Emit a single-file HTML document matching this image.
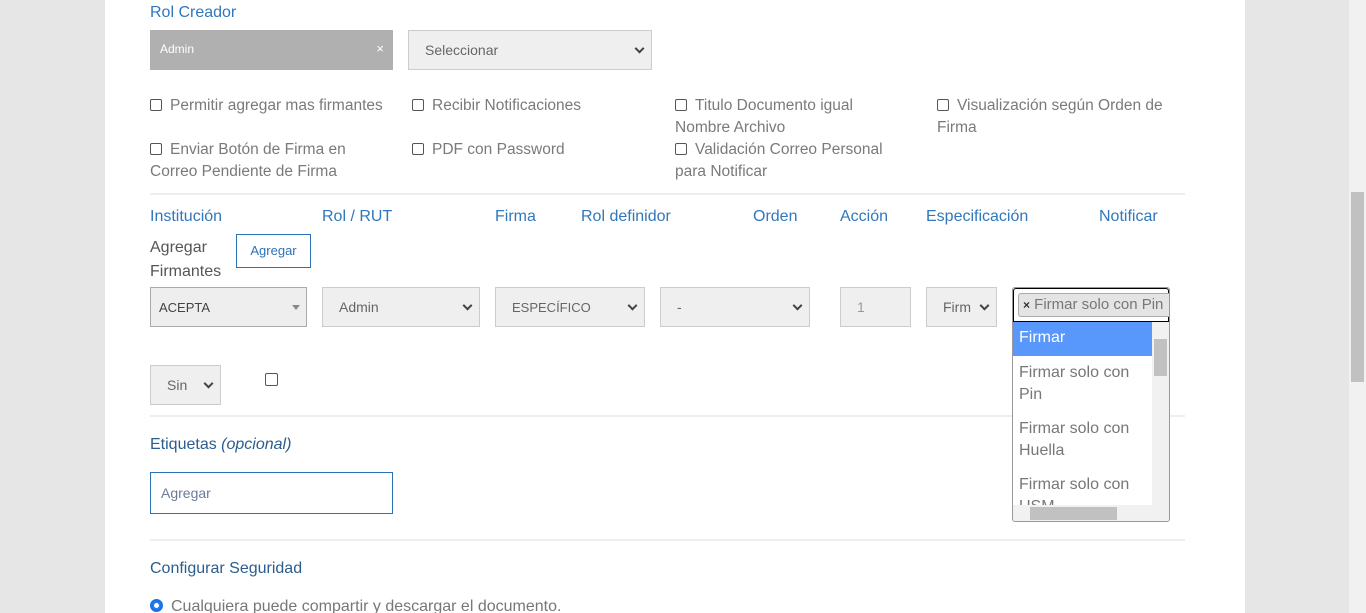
<!DOCTYPE html>
<html><head><meta charset="utf-8"><style>
*{box-sizing:border-box;margin:0;padding:0}
html,body{width:1366px;height:613px;overflow:hidden}
body{background:#e6e6e6;font-family:"Liberation Sans",sans-serif;position:relative}
.main{position:absolute;left:105px;top:0;width:1140px;height:613px;background:#fff}
.a{position:absolute;white-space:nowrap}
.blue{color:#3077bd;font-size:16px}
.g{color:#7a7a7a;font-size:15.5px;line-height:22px}
.cb{display:inline-block;width:12px;height:12px;border:1px solid #555;border-radius:2px;vertical-align:-1px;margin-right:8px;background:#fff}
.sel{position:absolute;background:#efefef;border:1px solid #ccc;color:#666;font-size:14px;padding-left:16px;display:flex;align-items:center}
.chev{position:absolute;right:8px;top:50%;width:7px;height:7px;border-right:2px solid #444;border-bottom:2px solid #444;transform:translateY(-70%) rotate(45deg)}
.hr{position:absolute;left:150px;width:1035px;height:2px;background:#eee}
</style></head><body>
<div class="main"></div>
<div class="a blue" style="left:150px;top:4px">Rol Creador</div>
<div class="a" style="left:150px;top:30px;width:243px;height:40px;background:#b0b0b0;color:#fff;font-size:12px;padding:12px 10px">Admin<span style="position:absolute;right:9px;top:11px;font-size:13px">×</span></div>
<div class="sel" style="left:408px;top:30px;width:244px;height:40px">Seleccionar<span class="chev"></span></div>

<div class="a g" style="left:150px;top:95px"><span class="cb"></span>Permitir agregar mas firmantes</div>
<div class="a g" style="left:412px;top:95px"><span class="cb"></span>Recibir Notificaciones</div>
<div class="a g" style="left:675px;top:95px"><span class="cb"></span>Titulo Documento igual<br>Nombre Archivo</div>
<div class="a g" style="left:937px;top:95px"><span class="cb"></span>Visualización según Orden de<br>Firma</div>
<div class="a g" style="left:150px;top:139px"><span class="cb"></span>Enviar Botón de Firma en<br>Correo Pendiente de Firma</div>
<div class="a g" style="left:412px;top:139px"><span class="cb"></span>PDF con Password</div>
<div class="a g" style="left:675px;top:139px"><span class="cb"></span>Validación Correo Personal<br>para Notificar</div>
<div class="hr" style="top:193px"></div>

<div class="a blue" style="left:150px;top:208px">Institución</div>
<div class="a blue" style="left:322px;top:208px">Rol / RUT</div>
<div class="a blue" style="left:495px;top:208px">Firma</div>
<div class="a blue" style="left:581px;top:208px">Rol definidor</div>
<div class="a blue" style="left:753px;top:208px">Orden</div>
<div class="a blue" style="left:840px;top:208px">Acción</div>
<div class="a blue" style="left:926px;top:208px">Especificación</div>
<div class="a blue" style="left:1099px;top:208px">Notificar</div>
<div class="a" style="left:150px;top:236px;color:#555;font-size:16px;line-height:24px">Agregar<br>Firmantes</div>
<div class="a" style="left:236px;top:234px;width:75px;height:34px;border:1px solid #2a72b8;color:#2a72b8;font-size:13px;text-align:center;line-height:32px">Agregar</div>

<div class="a" style="left:150px;top:287px;width:157px;height:40px;background:#eee;border:1px solid #aaa;color:#444;font-size:13px;padding:12px 8px">ACEPTA<span style="position:absolute;right:6px;top:17px;border:4px solid transparent;border-top:5px solid #888"></span></div>
<div class="sel" style="left:322px;top:287px;width:158px;height:40px">Admin<span class="chev"></span></div>
<div class="sel" style="left:495px;top:287px;width:150px;height:40px;font-size:13px">ESPECÍFICO<span class="chev"></span></div>
<div class="sel" style="left:660px;top:287px;width:150px;height:40px">-<span class="chev"></span></div>
<div class="sel" style="left:840px;top:287px;width:71px;height:40px;color:#999">1</div>
<div class="sel" style="left:926px;top:287px;width:71px;height:40px;padding-left:16px">Firm<span class="chev"></span></div>

<div class="sel" style="left:150px;top:365px;width:71px;height:40px">Sin<span class="chev"></span></div>
<div class="a" style="left:265px;top:373px;width:13px;height:13px;border:1px solid #555;border-radius:2px"></div>
<div class="hr" style="top:415px"></div>

<div class="a" style="left:150px;top:436px;color:#2b5d8e;font-size:16px">Etiquetas <i>(opcional)</i></div>
<div class="a" style="left:150px;top:472px;width:243px;height:42px;border:1px solid #2a72b8;color:#6a7b9a;font-size:14px;padding:12px 10px">Agregar</div>
<div class="hr" style="top:539px"></div>
<div class="a" style="left:150px;top:560px;color:#2b5d8e;font-size:16px">Configurar Seguridad</div>
<div class="a" style="left:150px;top:598px;color:#777;font-size:16px"><span style="display:inline-block;width:13px;height:13px;border-radius:50%;border:3px solid #1a73e8;background:#fff;box-shadow:inset 0 0 0 1px #1a73e8;vertical-align:-1px;margin-right:8px"></span>Cualquiera puede compartir y descargar el documento.</div>

<div class="a" style="left:1012px;top:287px;width:158px;height:235px;border:1px solid #999;border-radius:3px;background:#fff;overflow:hidden;z-index:5">
 <div style="position:absolute;left:0;top:0;width:156px;height:34px;border:1px solid #000;border-radius:3px 3px 0 0"></div>
 <div style="position:absolute;left:5px;top:5px;width:160px;height:24px;border:1px solid #aaa;border-radius:3px;background:#e4e4e4;color:#777;font-size:15px;padding:2px 4px;white-space:nowrap;overflow:hidden"><b style="color:#333;font-size:12px">×</b> Firmar solo con Pin</div>
 <div style="position:absolute;left:0;top:34px;width:139px;height:34px;background:#5897fb;color:#fff;font-size:16px;padding:7px 6px">Firmar</div>
 <div style="position:absolute;left:6px;top:74px;color:#777;font-size:16px;line-height:22px">Firmar solo con<br>Pin</div>
 <div style="position:absolute;left:6px;top:130px;color:#777;font-size:16px;line-height:22px">Firmar solo con<br>Huella</div>
 <div style="position:absolute;left:6px;top:186px;color:#777;font-size:16px;line-height:22px;height:31px;overflow:hidden">Firmar solo con<br>USM</div>
 <div style="position:absolute;left:139px;top:34px;width:17px;height:183px;background:#f1f1f1"><div style="position:absolute;left:2px;top:17px;width:13px;height:37px;background:#c1c1c1"></div></div>
 <div style="position:absolute;left:0;top:217px;width:156px;height:17px;background:#f1f1f1"><div style="position:absolute;left:17px;top:2px;width:87px;height:13px;background:#c1c1c1"></div></div>
</div>

<div class="a" style="left:1349px;top:0;width:17px;height:613px;background:#f1f1f1"><div style="position:absolute;left:2px;top:192px;width:13px;height:190px;background:#c1c1c1"></div></div>
</body></html>
